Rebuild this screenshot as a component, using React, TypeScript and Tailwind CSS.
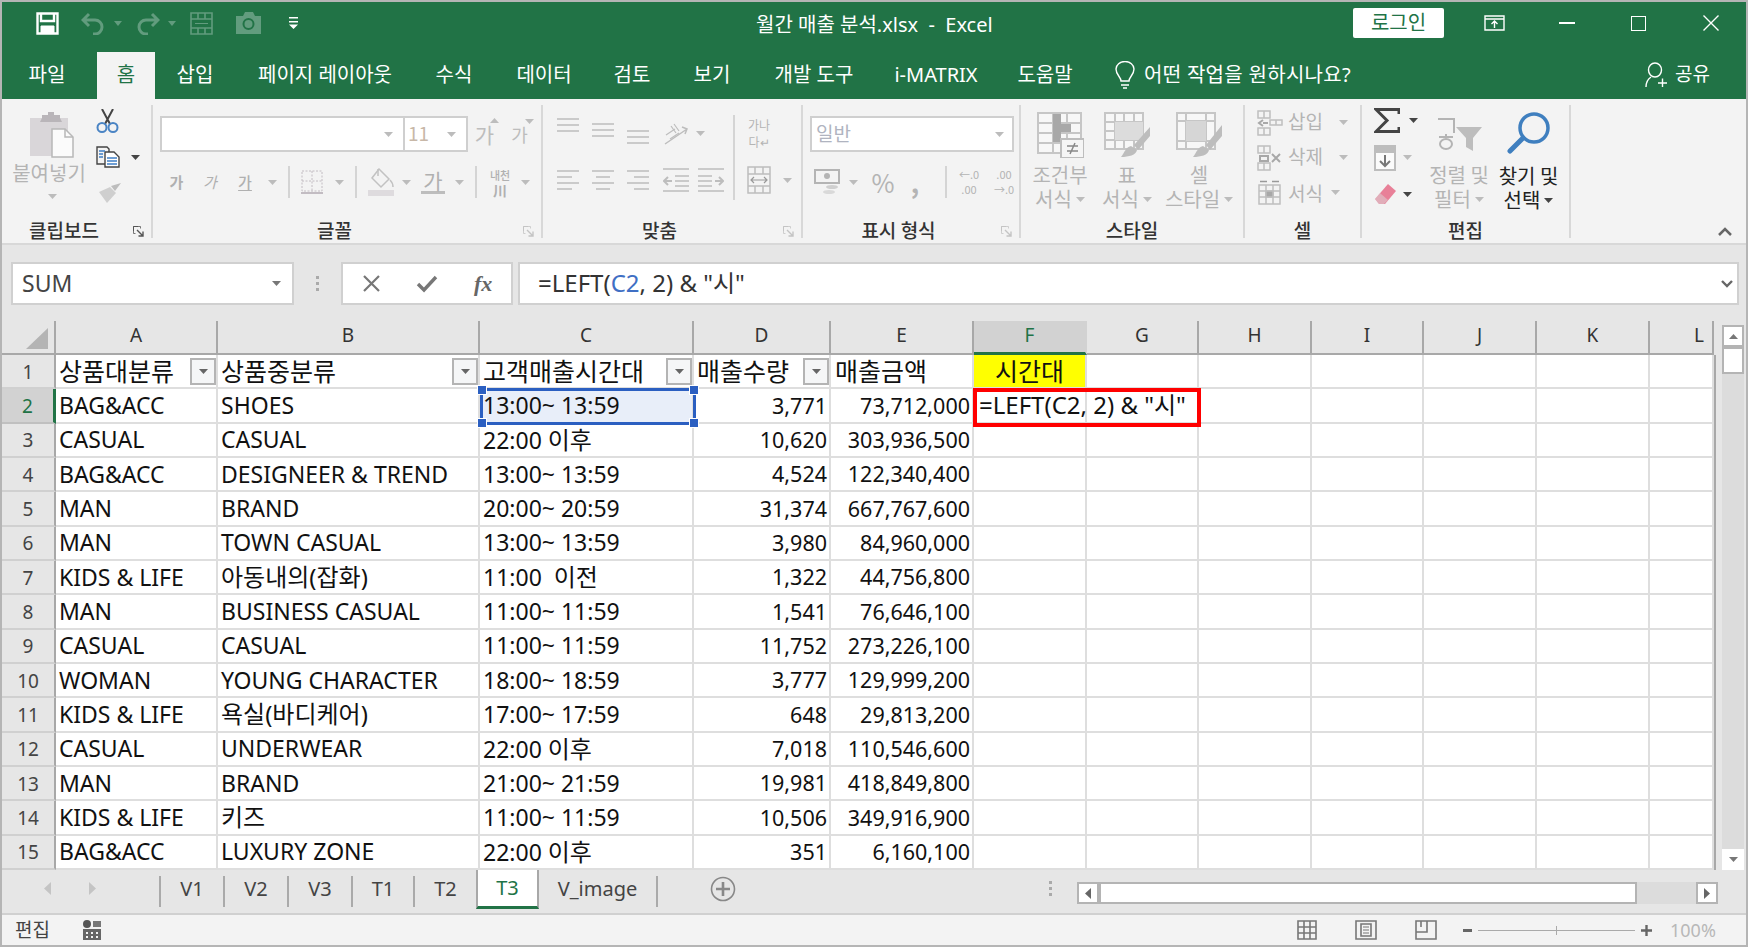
import { ReactNode } from "react";
import clsx from "clsx";

const colLetters = ["A", "B", "C", "D", "E", "F", "G", "H", "I", "J", "K", "L"];

const rows: string[][] = [
  ["BAG&ACC", "SHOES", "13:00~ 13:59", "3,771", "73,712,000"],
  ["CASUAL", "CASUAL", "22:00 이후", "10,620", "303,936,500"],
  ["BAG&ACC", "DESIGNEER & TREND", "13:00~ 13:59", "4,524", "122,340,400"],
  ["MAN", "BRAND", "20:00~ 20:59", "31,374", "667,767,600"],
  ["MAN", "TOWN CASUAL", "13:00~ 13:59", "3,980", "84,960,000"],
  ["KIDS & LIFE", "아동내의(잡화)", "11:00  이전", "1,322", "44,756,800"],
  ["MAN", "BUSINESS CASUAL", "11:00~ 11:59", "1,541", "76,646,100"],
  ["CASUAL", "CASUAL", "11:00~ 11:59", "11,752", "273,226,100"],
  ["WOMAN", "YOUNG CHARACTER", "18:00~ 18:59", "3,777", "129,999,200"],
  ["KIDS & LIFE", "욕실(바디케어)", "17:00~ 17:59", "648", "29,813,200"],
  ["CASUAL", "UNDERWEAR", "22:00 이후", "7,018", "110,546,600"],
  ["MAN", "BRAND", "21:00~ 21:59", "19,981", "418,849,800"],
  ["KIDS & LIFE", "키즈", "11:00~ 11:59", "10,506", "349,916,900"],
  ["BAG&ACC", "LUXURY ZONE", "22:00 이후", "351", "6,160,100"],
];

const tabs = [
  { label: "파일", w: "w-[90px]" },
  { label: "", w: "w-[5px]" },
  { label: "홈", w: "w-[58px]", active: true },
  { label: "삽입", w: "w-[80px]" },
  { label: "페이지 레이아웃", w: "w-[180px]" },
  { label: "수식", w: "w-[78px]" },
  { label: "데이터", w: "w-[102px]" },
  { label: "검토", w: "w-[74px]" },
  { label: "보기", w: "w-[86px]" },
  { label: "개발 도구", w: "w-[118px]" },
  { label: "i-MATRIX", w: "w-[126px]" },
  { label: "도움말", w: "w-[92px]" },
];

const sheets = [
  { label: "V1", w: "w-[64px]" },
  { label: "V2", w: "w-[64px]" },
  { label: "V3", w: "w-[64px]" },
  { label: "T1", w: "w-[62px]" },
  { label: "T2", w: "w-[63px]" },
];

function CellText({ text }: { text: string }) {
  return (
    <>
      {text.split(/([가-힣()]+)/).map((part, i) =>
        /[가-힣]/.test(part) ? (
          <span key={i} className="text-[24px]">
            {part}
          </span>
        ) : (
          part
        )
      )}
    </>
  );
}

function Caret({ className = "fill-[#bcbcbc]" }: { className?: string }) {
  return (
    <svg width="9" height="5" viewBox="0 0 9 5" className={clsx("shrink-0", className)}>
      <path d="M0 0h9L4.5 5z" />
    </svg>
  );
}

function Launcher({ dark }: { dark?: boolean }) {
  const c = dark ? "#555" : "#c4c4c4";
  return (
    <svg width="11" height="11" viewBox="0 0 11 11" fill="none">
      <path d="M.5 5V.5H5" stroke={c} />
      <path d="M.5 .5h7v2M.5 .5v7h2" stroke={c} strokeWidth=".8" />
      <path d="M4 4l5.5 5.5M10 5.5V10H5.5" stroke={c} strokeWidth="1.4" />
    </svg>
  );
}

function Group({
  className,
  label,
  launcher,
  dark,
  children,
}: {
  className: string;
  label: string;
  launcher?: boolean;
  dark?: boolean;
  children: ReactNode;
}) {
  return (
    <div className={clsx("flex h-[133px] shrink-0 flex-col border-r-2 border-[#d8d8d8]", className)}>
      <div className="min-h-0 flex-1">{children}</div>
      <div className="flex h-[18px] items-center">
        <span className="flex-1 text-center text-[19px] leading-none font-medium text-[#333]">{label}</span>
        {launcher && (
          <span className="flex w-[25px] justify-center pt-[4px]">
            <Launcher dark={dark} />
          </span>
        )}
      </div>
    </div>
  );
}

function VSep({ className }: { className?: string }) {
  return <div className={clsx("w-[2px] shrink-0 bg-[#d4d4d4]", className)} />;
}

function Lines({ kind = "center" }: { kind?: "top" | "left" | "right" | "center" }) {
  const d =
    kind === "left"
      ? "M0 1h22M0 7h15M0 13h22M0 19h15"
      : kind === "right"
        ? "M0 1h22M7 7h15M0 13h22M7 19h15"
        : kind === "center"
          ? "M0 1h22M4 7h14M0 13h22M4 19h14"
          : "M0 1h22M0 7h22M0 13h22";
  return (
    <svg width="22" height="20" viewBox="0 0 22 20" fill="none" stroke="#bdbdbd" strokeWidth="1.5">
      <path d={d} />
    </svg>
  );
}

function IndentIcon({ flip }: { flip?: boolean }) {
  return (
    <svg width="26" height="24" viewBox="0 0 26 24" fill="none" stroke="#bdbdbd" strokeWidth="1.5" className={flip ? "-scale-x-100" : ""}>
      <path d="M0 1h26M12 8h14M12 13h14M12 18h14M0 23h26" />
      <path d="M9 13H1M5 9l-4 4 4 4" strokeWidth="2" />
    </svg>
  );
}

function MergeIcon() {
  return (
    <svg width="24" height="28" viewBox="0 0 24 28" fill="none" stroke="#bdbdbd" strokeWidth="1.5">
      <path d="M1 1h22v26H1zM1 8h22M1 20h22M8 1v7M16 1v7M8 20v7M16 20v7" />
      <path d="M4 14h16M7 11l-3 3 3 3M17 11l3 3-3 3" strokeWidth="1.2" stroke="#999" />
    </svg>
  );
}

function CellGridIcon({ variant }: { variant: "cond" | "table" | "cell" }) {
  return (
    <svg width="47" height="46" viewBox="0 0 47 46" fill="none">
      {variant === "cond" && (
        <>
          <path d="M1 1h43v40H1zM1 11h43M1 21h43M1 31h43M16 1v40M30 1v40" stroke="#c6c6c6" strokeWidth="2" fill="#f7f7f7" />
          <path d="M16 2h8v28h-8zM24 12h10v8H24z" fill="#a8a8a8" />
          <path d="M24 27h23v19H24z" fill="#f5f5f5" stroke="#bdbdbd" strokeWidth="2" />
          <path d="M30 34h11M30 39h11M38 31l-5 11" stroke="#888" strokeWidth="1.5" />
        </>
      )}
      {variant === "table" && (
        <>
          <path d="M1 1h38v36H1zM1 10h38M1 19h38M1 28h38M11 1v36M20 1v36M30 1v36" stroke="#c6c6c6" strokeWidth="2" fill="#f7f7f7" />
          <path d="M11 10h28v18H11z" fill="#dcdcdc" />
          <path d="M46 15L30 33l4 5 12-14zM27 34c-6 2-6 6-10 11 8 0 15-2 16-7z" fill="#bdbdbd" />
        </>
      )}
      {variant === "cell" && (
        <>
          <path d="M1 1h38v36H1zM1 9h38M1 29h38M10 1v36M30 1v36" stroke="#c6c6c6" strokeWidth="2" fill="#f7f7f7" />
          <path d="M10 9h20v20H10z" fill="#d6d6d6" />
          <path d="M46 13L30 33l4 5 12-14zM27 34c-6 2-6 6-10 11 8 0 15-2 16-7z" fill="#bdbdbd" />
        </>
      )}
    </svg>
  );
}

function SmallCellIcon({ variant }: { variant: "insert" | "delete" | "format" }) {
  return (
    <svg width="26" height="26" viewBox="0 0 26 26" fill="none" stroke="#bfbfbf" strokeWidth="1.5">
      {variant === "format" ? (
        <>
          <path d="M2 5h21v19H2zM2 11h21M2 17h21M9 5v19M16 5v19" />
          <path d="M9 11h7v6H9z" fill="#a8a8a8" />
          <path d="M3 1.5h7M15 1.5h7" stroke="#999" />
        </>
      ) : (
        <>
          <path d="M1 1h12v7H1zM1 18h12v7H1zM7 1v7M7 18v7" />
          <path d={variant === "insert" ? "M6 13h5M6 10l-4 3 4 3" : "M3 11h8v5H3z"} stroke="#a8a8a8" strokeWidth="2" />
          {variant === "insert" ? (
            <path d="M13 10h12v5H13zM19 10v5" />
          ) : (
            <path d="M15 9l8 8M23 9l-8 8" stroke="#a8a8a8" strokeWidth="2" />
          )}
        </>
      )}
    </svg>
  );
}

function Ribbon() {
  const disabled = "text-[#b4b4b4]";
  return (
    <div className="flex h-[146px] shrink-0 border-b-2 border-[#d8d8d8] bg-[#f3f3f3] pt-[6px] font-['Noto_Sans_CJK_KR','Noto_Sans',sans-serif]">
      <Group className="w-[151px]" label="클립보드" launcher dark>
        <div className="flex h-full">
          <div className="flex w-[94px] flex-col items-center pt-[7px]">
            <svg width="44" height="46" viewBox="0 0 44 46" className="ml-[6px]">
              <path d="M0 6h38v38H0z" fill="#d9d6d9" />
              <path d="M12 6V3h6V0h6v3h6v3l2 4H10z" fill="#b9b5b9" />
              <path d="M22 17h13l8 8v20H22z" fill="#fbfbfb" stroke="#b8b8b8" strokeWidth="1.5" />
              <path d="M35 17v8h8" fill="none" stroke="#b8b8b8" strokeWidth="1.5" />
            </svg>
            <span className={clsx("mt-[2px] text-[20px] leading-[26px]", disabled)}>붙여넣기</span>
            <span className="mt-[8px] ml-[6px]">
              <Caret />
            </span>
          </div>
          <div className="flex flex-col pt-[4px]">
            <svg width="23" height="24" viewBox="0 0 23 24" fill="none">
              <path d="M6 0l8 15M17 0L9 15" stroke="#444" strokeWidth="2" />
              <circle cx="6" cy="18.5" r="4.5" stroke="#4a84c4" strokeWidth="2" />
              <circle cx="17" cy="18.5" r="4.5" stroke="#4a84c4" strokeWidth="2" />
            </svg>
            <div className="mt-[13px] flex items-center gap-[11px]">
              <svg width="24" height="22" viewBox="0 0 24 22" fill="none" stroke="#444" strokeWidth="1.4">
                <path d="M1 1h10l2 2v15H1z" fill="#f3f3f3" />
                <path d="M9 6h9l5 5v10H9z" fill="#fff" />
                <path d="M3 5h6M3 8h4M3 11h4M11 12h10M11 15h10M11 18h10" stroke="#3f7fc6" />
              </svg>
              <Caret className="fill-[#444]" />
            </div>
            <svg width="26" height="22" viewBox="0 0 26 22" className="mt-[14px]">
              <path d="M25 1L15 4l4 5z" fill="#bdbdbd" />
              <path d="M14 5L3 10l8 11 9-10z" fill="#cfcfcf" />
            </svg>
          </div>
        </div>
      </Group>

      <Group className="w-[390px]" label="글꼴" launcher>
        <div className="flex flex-col pt-[11px] pl-[7px]">
          <div className="flex h-[36px] items-center">
            <div className="flex h-full w-[245px] items-center justify-end border-2 border-[#cfcfcf] bg-white pr-[10px]">
              <Caret />
            </div>
            <div className="flex h-full w-[63px] items-center justify-between border-2 border-l-0 border-[#cfcfcf] bg-white pr-[10px] pl-[3px]">
              <span className="pb-[3px] text-[19px] leading-none text-[#c8b8a8]">11</span>
              <Caret />
            </div>
            <div className="relative flex w-[33px] items-center justify-center text-[21px] leading-none text-[#bdbdbd]">
              가
              <span className="absolute -top-[6px] right-[2px]">
                <Caret className="rotate-180 fill-[#bdbdbd]" />
              </span>
            </div>
            <div className="relative flex w-[37px] items-center justify-center text-[18px] leading-none text-[#bdbdbd]">
              가
              <span className="absolute -top-[6px] right-[4px]">
                <Caret className="fill-[#bdbdbd]" />
              </span>
            </div>
          </div>
          <div className="mt-[12px] flex h-[36px] items-center text-[#b0b0b0]">
            <span className="w-[33px] text-center text-[15px] font-bold">가</span>
            <span className="w-[34px] text-center text-[15px] italic">가</span>
            <span className="w-[36px] text-center text-[15px] font-medium underline underline-offset-2">가</span>
            <span className="flex w-[18px] justify-center">
              <Caret />
            </span>
            <span className="flex w-[16px] justify-center">
              <VSep className="h-[32px]" />
            </span>
            <span className="flex w-[30px] justify-center">
              <svg width="22" height="24" viewBox="0 0 22 24" fill="none" stroke="#c2bcc2" strokeDasharray="2 1.5">
                <path d="M1 1h20v20H1zM1 11h20M11 1v20" />
                <path d="M0 23h22" strokeDasharray="none" strokeWidth="2" />
              </svg>
            </span>
            <span className="flex w-[24px] justify-center">
              <Caret />
            </span>
            <span className="flex w-[10px] justify-center">
              <VSep className="h-[32px]" />
            </span>
            <span className="flex w-[40px] justify-center">
              <svg width="26" height="28" viewBox="0 0 26 28" fill="none">
                <path d="M11 1l10 10-8 8-9-9z" stroke="#c2c2c2" strokeWidth="1.5" />
                <path d="M10 1v7M22 12c3 3 3 6 3 7" stroke="#c2c2c2" strokeWidth="1.5" />
                <path d="M0 22h26v6H0z" fill="#dedbde" />
              </svg>
            </span>
            <span className="flex w-[10px] justify-center">
              <Caret />
            </span>
            <span className="flex w-[44px] justify-center text-[21px] leading-none">
              <span className="border-b-[3px] border-[#bdbdbd] px-[2px]">가</span>
            </span>
            <span className="flex w-[8px] justify-center">
              <Caret />
            </span>
            <span className="flex w-[26px] justify-center">
              <VSep className="h-[32px]" />
            </span>
            <span className="flex w-[22px] flex-col items-center whitespace-nowrap">
              <span className="text-[11px] leading-[16px] font-medium">내천</span>
              <span className="text-[14px] leading-[14px] font-bold">川</span>
            </span>
            <span className="ml-[10px]">
              <Caret />
            </span>
          </div>
        </div>
      </Group>

      <Group className="w-[260px]" label="맞춤" launcher>
        <div className="flex pt-[10px] pl-[7px]">
          <div className="flex w-[183px] flex-col">
            <div className="flex h-[36px] items-center">
              <span className="flex w-[35px] justify-center pb-[10px]">
                <Lines kind="top" />
              </span>
              <span className="flex h-[20px] w-[35px] justify-center">
                <Lines kind="top" />
              </span>
              <span className="flex w-[35px] justify-center pt-[14px]">
                <Lines kind="top" />
              </span>
              <span className="flex w-[41px] justify-center">
                <svg width="26" height="26" viewBox="0 0 26 26" fill="none" stroke="#bdbdbd" strokeWidth="1.5">
                  <path d="M2 24L24 9M19 7l5 2-2 5" />
                  <path d="M3 15l9-6M7 19l9-6M8 6l5 7M11 4l5 7" strokeWidth="1.2" />
                </svg>
              </span>
              <Caret />
            </div>
            <div className="mt-[11px] flex h-[36px] items-center">
              <span className="flex w-[35px] justify-center">
                <Lines kind="left" />
              </span>
              <span className="flex w-[35px] justify-center">
                <Lines kind="center" />
              </span>
              <span className="flex w-[35px] justify-center">
                <Lines kind="right" />
              </span>
              <span className="flex w-[41px] justify-center">
                <IndentIcon />
              </span>
              <span className="flex w-[30px] justify-center">
                <IndentIcon flip />
              </span>
            </div>
          </div>
          <VSep className="h-[85px]" />
          <div className="flex flex-col pl-[12px]">
            <div className="flex h-[36px] w-[24px] flex-col items-center justify-center text-[12px] leading-[17px] whitespace-nowrap text-[#b4b4b4]">
              <span>가나</span>
              <span>다↵</span>
            </div>
            <div className="mt-[11px] flex h-[36px] items-center gap-[12px]">
              <MergeIcon />
              <Caret />
            </div>
          </div>
        </div>
      </Group>

      <Group className="w-[218px]" label="표시 형식" launcher>
        <div className="flex flex-col pt-[11px] pl-[7px]">
          <div className="flex h-[36px] w-[204px] items-center justify-between border-2 border-[#cfcfcf] bg-white pr-[8px] pl-[4px]">
            <span className="pb-[3px] text-[19px] leading-none text-[#b0b4c0]">일반</span>
            <Caret />
          </div>
          <div className="mt-[12px] flex h-[36px] items-center">
            <span className="flex w-[34px] justify-center">
              <svg width="26" height="26" viewBox="0 0 26 26" fill="none">
                <path d="M1 1h24v13H1z" stroke="#b4b4b4" strokeWidth="2" />
                <circle cx="13" cy="7" r="3" fill="#b4b4b4" />
                <ellipse cx="18" cy="18" rx="6" ry="2" fill="#cfcfcf" />
                <ellipse cx="15" cy="23" rx="6" ry="2" fill="#d9d9d9" />
              </svg>
            </span>
            <span className="ml-[5px]">
              <Caret />
            </span>
            <span className="ml-[6px] w-[38px] text-center text-[25px] leading-none text-[#b4b4b4]">%</span>
            <span className="w-[26px] text-center text-[26px] leading-none font-bold text-[#b4b4b4]">,</span>
            <VSep className="ml-[17px] h-[32px]" />
            <span className="ml-[10px] flex w-[24px] flex-col items-center text-[11px] leading-[15px] text-[#b4b4b4]">
              <span>←.0</span>
              <span>.00</span>
            </span>
            <span className="ml-[11px] flex w-[24px] flex-col items-center text-[11px] leading-[15px] text-[#b4b4b4]">
              <span>.00</span>
              <span>→.0</span>
            </span>
          </div>
        </div>
      </Group>

      <Group className="w-[224px]" label="스타일">
        <div className={clsx("flex pt-[7px] text-center text-[20px] leading-[24px]", disabled)}>
          <div className="flex w-[78px] flex-col items-center">
            <CellGridIcon variant="cond" />
            <span className="mt-[5px]">조건부</span>
            <span className="flex items-center gap-[4px]">
              서식 <Caret />
            </span>
          </div>
          <div className="flex w-[56px] flex-col items-center">
            <CellGridIcon variant="table" />
            <span className="mt-[5px]">표</span>
            <span className="flex items-center gap-[4px] whitespace-nowrap">
              서식 <Caret />
            </span>
          </div>
          <div className="flex w-[88px] flex-col items-center">
            <CellGridIcon variant="cell" />
            <span className="mt-[5px]">셀</span>
            <span className="flex items-center gap-[4px] whitespace-nowrap">
              스타일 <Caret />
            </span>
          </div>
        </div>
      </Group>

      <Group className="w-[117px]" label="셀">
        <div className={clsx("flex flex-col pl-[12px] text-[19px] leading-none", disabled)}>
          <div className="flex h-[35px] items-center gap-[5px]">
            <SmallCellIcon variant="insert" />
            <span className="pb-[4px]">삽입</span>
            <span className="ml-[11px]">
              <Caret />
            </span>
          </div>
          <div className="flex h-[35px] items-center gap-[5px]">
            <SmallCellIcon variant="delete" />
            <span className="pb-[4px]">삭제</span>
            <span className="ml-[11px]">
              <Caret />
            </span>
          </div>
          <div className="flex h-[35px] items-center gap-[5px]">
            <SmallCellIcon variant="format" />
            <span className="pb-[1px]">서식</span>
            <span className="ml-[3px]">
              <Caret />
            </span>
          </div>
        </div>
      </Group>

      <Group className="w-[209px]" label="편집">
        <div className="flex text-center text-[20px] leading-[24px]">
          <div className="flex w-[68px] flex-col pl-[12px]">
            <div className="flex h-[30px] items-center gap-[9px]">
              <svg width="26" height="25" viewBox="0 0 26 25" fill="none">
                <path d="M25 6V1.5H2L13 12.5 2 23.5h23V19" stroke="#444" strokeWidth="3" />
              </svg>
              <Caret className="fill-[#444]" />
            </div>
            <div className="mt-[9px] flex h-[27px] items-center gap-[7px]">
              <svg width="22" height="26" viewBox="0 0 22 26" fill="none">
                <path d="M1 1h20v24H1z" fill="#fbfbfb" stroke="#bdbdbd" strokeWidth="2" />
                <path d="M1 1h20v7H1z" fill="#bdbdbd" />
                <path d="M11 10v11M6 16l5 5 5-5" stroke="#777" strokeWidth="2" />
              </svg>
              <Caret />
            </div>
            <div className="mt-[11px] flex h-[24px] items-center gap-[7px]">
              <svg width="22" height="22" viewBox="0 0 22 22">
                <path d="M14 1l8 7-11 13H5L1 16z" fill="#e88098" />
                <path d="M1 16l5-6 8 7-4 4H5z" fill="#d9d9d9" opacity=".5" />
              </svg>
              <Caret className="fill-[#444]" />
            </div>
          </div>
          <div className={clsx("flex w-[58px] flex-col items-center pt-[12px]", disabled)}>
            <svg width="46" height="34" viewBox="0 0 46 34" fill="none">
              <path d="M2 2h16v14" stroke="#b4b4b4" strokeWidth="2" />
              <path d="M3 20h14M10 17v3" stroke="#b4b4b4" strokeWidth="2" />
              <ellipse cx="10" cy="27" rx="6" ry="5" stroke="#b4b4b4" strokeWidth="2" />
              <path d="M20 10h26L37 21v13l-7-4v-9z" fill="#bdbdbd" />
            </svg>
            <span className="mt-[12px] whitespace-nowrap">정렬 및</span>
            <span className="flex items-center gap-[4px]">
              필터 <Caret />
            </span>
          </div>
          <div className="flex w-[81px] flex-col items-center pt-[7px] text-[#222]">
            <svg width="44" height="42" viewBox="0 0 44 42" fill="none">
              <circle cx="27" cy="16" r="14" stroke="#3f7fbf" strokeWidth="3.5" />
              <path d="M16 26L3 39" stroke="#3f7fbf" strokeWidth="5" strokeLinecap="round" />
            </svg>
            <span className="mt-[10px] whitespace-nowrap">찾기 및</span>
            <span className="flex items-center gap-[4px]">
              선택 <Caret className="fill-[#444]" />
            </span>
          </div>
        </div>
      </Group>

      <div className="flex flex-1 items-end justify-end pr-[13px] pb-[7px]">
        <svg width="16" height="10" viewBox="0 0 16 10" fill="none" stroke="#666" strokeWidth="2.5">
          <path d="M2 9l6-6 6 6" />
        </svg>
      </div>
    </div>
  );
}

function TitleBar() {
  const muted = "#629c7e";
  return (
    <div className="flex h-[48px] shrink-0 items-center bg-[#217346] pb-[6px] text-white">
      <div className="flex w-[754px] items-center pl-[34px]">
        <svg width="23" height="23" viewBox="0 0 23 23" fill="none" stroke="#fff" strokeWidth="2.4">
          <path d="M1.5 1.5h20v20h-20zM5 2v7h13V2" />
          <path d="M5 22v-8h13v8M10 22v-4h3v4" fill="#fff" stroke="#fff" strokeWidth="1" />
        </svg>
        <svg width="23" height="23" viewBox="0 0 23 23" fill="none" stroke={muted} strokeWidth="3" className="ml-[22px]">
          <path d="M8 2L2 8l6 6M3 8h11a7 7 0 0 1 0 14h-2" />
        </svg>
        <span className="ml-[10px] h-0 w-0 border-x-[4px] border-t-[5px] border-x-transparent border-t-[#629c7e]" />
        <svg width="23" height="23" viewBox="0 0 23 23" fill="none" stroke={muted} strokeWidth="3" className="ml-[15px] -scale-x-100">
          <path d="M8 2L2 8l6 6M3 8h11a7 7 0 0 1 0 14h-2" />
        </svg>
        <span className="ml-[8px] h-0 w-0 border-x-[4px] border-t-[5px] border-x-transparent border-t-[#629c7e]" />
        <svg width="23" height="23" viewBox="0 0 23 23" fill="none" stroke={muted} strokeWidth="1.6" className="ml-[14px]">
          <path d="M1 1h21v21H1zM1 7h21M1 16h21M8 1v6M15 1v6M8 16v6M15 16v6" />
          <path d="M5 11.5h13" strokeWidth="1" />
        </svg>
        <svg width="25" height="22" viewBox="0 0 25 22" className="ml-[23px]">
          <path d="M0 4h7l2-4h8l2 4h6v18H0z" fill={muted} />
          <circle cx="12.5" cy="12" r="5" fill="none" stroke="#217346" strokeWidth="2" />
        </svg>
        <svg width="11" height="14" viewBox="0 0 11 14" fill="#fff" className="ml-[27px]">
          <path d="M1 1h9v1.5H1zM1 5h9v1.5H1zM1 8.5h9L5.5 13z" />
        </svg>
      </div>
      <div className="mt-[4px] w-[597px] text-[20px] whitespace-pre">월간 매출 분석.xlsx  -  Excel</div>
      <div className="flex h-[30px] w-[91px] items-center justify-center rounded-[2px] bg-white text-[20px] text-[#217346]">
        로그인
      </div>
      <svg width="21" height="16" viewBox="0 0 21 16" fill="none" stroke="#fff" strokeWidth="1.4" className="ml-[40px]">
        <path d="M1 1h19v14H1zM1 4h19M10.5 13V7M7.5 9l3-3 3 3" />
      </svg>
      <div className="ml-[54px] h-[2px] w-[16px] bg-white" />
      <div className="ml-[56px] h-[15px] w-[15px] border-[1.5px] border-white" />
      <svg width="16" height="16" viewBox="0 0 16 16" stroke="#fff" strokeWidth="1.4" className="ml-[57px]">
        <path d="M.5.5l15 15M15.5.5l-15 15" />
      </svg>
    </div>
  );
}

function TabBar() {
  return (
    <div className="flex h-[49px] shrink-0 items-end bg-[#217346] text-[20px] text-white">
      {tabs.map((tab, i) => (
        <div
          key={i}
          className={clsx(
            "flex h-[47px] shrink-0 items-center justify-center pb-[2px] whitespace-nowrap",
            tab.w,
            tab.active && "bg-[#f3f3f3] text-[#217346]"
          )}
        >
          {tab.label}
        </div>
      ))}
      <div className="ml-[22px] flex h-[47px] items-center pb-[2px]">
        <svg width="24" height="28" viewBox="0 0 24 28" fill="none" stroke="#fff" strokeWidth="1.4">
          <path d="M8 20c0-4-5-6-5-12a9 7.5 0 0 1 18 0c0 6-5 8-5 12zM8 24h8M10 27h4" />
        </svg>
        <span className="ml-[7px] text-[20px] tracking-[0.3px] whitespace-nowrap">어떤 작업을 원하시나요?</span>
      </div>
      <div className="ml-auto flex h-[47px] items-center pr-[36px] pb-[2px]">
        <svg width="22" height="25" viewBox="0 0 22 25" fill="none" stroke="#fff" strokeWidth="1.4">
          <ellipse cx="10" cy="8" rx="6.5" ry="7" />
          <path d="M1 25c0-5 2-8 5-10M13 21h9M17.500 16.500v8.500" />
        </svg>
        <span className="ml-[8px] text-[19px]">공유</span>
      </div>
    </div>
  );
}

function FormulaBar() {
  const box = "flex h-[43px] items-center border-2 border-[#d0d0d0] bg-white";
  return (
    <div className="flex h-[76px] shrink-0 items-start bg-[#e6e6e6] pt-[17px] pl-[9px]">
      <div className={clsx(box, "w-[283px] justify-between pr-[11px] pl-[9px] text-[23px] text-[#444]")}>
        SUM
        <Caret className="fill-[#777]" />
      </div>
      <div className="flex h-[43px] w-[47px] flex-col items-center justify-center gap-[3px]">
        <span className="h-[3px] w-[3px] bg-[#aaa]" />
        <span className="h-[3px] w-[3px] bg-[#aaa]" />
        <span className="h-[3px] w-[3px] bg-[#aaa]" />
      </div>
      <div className={clsx(box, "w-[172px]")}>
        <span className="flex w-[58px] justify-center">
          <svg width="17" height="17" viewBox="0 0 17 17" stroke="#777" strokeWidth="2.2">
            <path d="M1 1l15 15M16 1L1 16" />
          </svg>
        </span>
        <span className="flex w-[57px] justify-center">
          <svg width="22" height="18" viewBox="0 0 22 18" fill="none" stroke="#777" strokeWidth="3.4">
            <path d="M2 9l6 6L20 2" />
          </svg>
        </span>
        <span className="w-[57px] text-center font-['Liberation_Serif',serif] text-[22px] leading-none font-bold text-[#666] italic">
          fx
        </span>
      </div>
      <div className={clsx(box, "ml-[5px] w-[1221px] justify-between pr-[4px] pl-[18px] text-[24px] leading-none text-[#333]")}>
        <span className="pb-[2px] whitespace-pre">
          =LEFT(<span className="text-[#3f6fc4]">C2</span>, 2) &amp; "시"
        </span>
        <svg width="12" height="8" viewBox="0 0 12 8" fill="none" stroke="#666" strokeWidth="2.4">
          <path d="M1 1l5 5 5-5" />
        </svg>
      </div>
    </div>
  );
}

function FilterButton() {
  return (
    <span className="flex h-[27px] w-[26px] shrink-0 items-center justify-center border-2 border-[#b4b4b4] bg-[#f5f6f7]">
      <Caret className="fill-[#666]" />
    </span>
  );
}

function Sheet() {
  const cell = "flex items-center overflow-hidden whitespace-pre border-r-2 border-b-2 border-[#dedede] leading-none text-[#111]";
  const header = ["상품대분류", "상품중분류", "고객매출시간대", "매출수량"];
  return (
    <div className="flex h-[549px] shrink-0">
      <div className="relative w-[1712px] shrink-0 bg-white">
        <div className="grid grid-cols-[54px_162px_262px_214px_137px_143px_113px_112px_113px_112px_113px_113px_64px] grid-rows-[34px_repeat(15,34.33px)]">
          <div className="flex items-end justify-end border-r-2 border-b-2 border-[#a8a8a8] bg-[#e6e6e6] pr-[6px] pb-[4px]">
            <svg width="22" height="21" viewBox="0 0 22 21">
              <path d="M22 0v21H0z" fill="#b4b4b4" />
            </svg>
          </div>
          {colLetters.map((c) => (
            <div
              key={c}
              className={clsx(
                "flex items-center justify-center border-r-2 pb-[3px] text-[19px] leading-none",
                c === "F"
                  ? "border-b-[3px] border-r-[#d2d2d2] border-b-[#217346] bg-[#d2d2d2] text-[#217346]"
                  : "border-b-2 border-[#a8a8a8] bg-[#e6e6e6] text-[#333]",
                c === "L" && "justify-end border-r-0 pr-[8px]"
              )}
            >
              {c}
            </div>
          ))}

          <div className="flex items-center justify-center border-r-2 border-b-2 border-[#a8a8a8] border-b-[#d0d0d0] bg-[#e6e6e6] pt-[2px] text-[19px] leading-none text-[#444]">
            1
          </div>
          {header.map((h) => (
            <div key={h} className={clsx(cell, "justify-between pl-[3px] text-[25px]")}>
              {h}
              <FilterButton />
            </div>
          ))}
          <div className={clsx(cell, "pl-[4px] text-[25px]")}>매출금액</div>
          <div className={clsx(cell, "justify-center bg-[#ffff00] text-[25px]")}>시간대</div>
          {[0, 1, 2, 3, 4, 5].map((i) => (
            <div key={i} className={clsx(cell, i === 5 && "border-r-0")} />
          ))}

          {rows.map((row, r) => (
            <div key={r} className="contents">
              <div
                className={clsx(
                  "flex items-center justify-center border-b-2 pt-[2px] text-[19px] leading-none",
                  r === 0
                    ? "border-r-[3px] border-r-[#217346] border-b-[#c0c0c0] bg-[#d2d2d2] text-[#217346]"
                    : "border-r-2 border-r-[#a8a8a8] border-b-[#d0d0d0] bg-[#e6e6e6] text-[#444]"
                )}
              >
                {r + 2}
              </div>
              {row.map((v, c) => (
                <div
                  key={c}
                  className={clsx(
                    cell,
                    c < 3 ? "pl-[3px] text-[23px]" : "justify-end pr-[2px] text-[21.5px]",
                    r === 0 && c === 2 && "bg-[#e8eef9]"
                  )}
                >
                  <span>
                    <CellText text={v} />
                  </span>
                </div>
              ))}
              <div className={clsx(cell, "overflow-visible pl-[5px] text-[24px]", r === 0 && "border-r-0")}>
                {r === 0 && '=LEFT(C2, 2) & "시"'}
              </div>
              {[0, 1, 2, 3, 4, 5].map((i) => (
                <div key={i} className={clsx(cell, i === 5 && "border-r-0")} />
              ))}
            </div>
          ))}
        </div>

        {/* 선택 셀 테두리 + 빨간 강조 박스 */}
        <div className="pointer-events-none absolute top-[67px] left-[478px] h-[37px] w-[216px] border-[3px] border-[#2b5fc1]">
          <span className="absolute -top-[5px] -left-[5px] h-[8px] w-[8px] bg-[#2b5fc1] ring-1 ring-white" />
          <span className="absolute -top-[5px] -right-[5px] h-[8px] w-[8px] bg-[#2b5fc1] ring-1 ring-white" />
          <span className="absolute -bottom-[5px] -left-[5px] h-[8px] w-[8px] bg-[#2b5fc1] ring-1 ring-white" />
          <span className="absolute -right-[5px] -bottom-[5px] h-[8px] w-[8px] bg-[#2b5fc1] ring-1 ring-white" />
        </div>
        <div className="pointer-events-none absolute top-[67px] left-[971px] h-[39px] w-[228px] border-[4px] border-[#ff0000]" />
      </div>
      <div className="mt-[34px] h-[515px] w-[2px] shrink-0 bg-[#a8a8a8]" />
      <div className="ml-[6px] flex w-[22px] shrink-0 flex-col">
        <div className="mt-[4px] flex h-[22px] shrink-0 items-center justify-center border-2 border-[#b4b4b4] bg-white">
          <Caret className="rotate-180 fill-[#777]" />
        </div>
        <div className="flex min-h-0 flex-1 flex-col bg-[#dcdcdc]">
          <div className="h-[27px] shrink-0 border-2 border-[#b4b4b4] bg-white" />
        </div>
        <div className="flex h-[21px] shrink-0 items-center justify-center bg-white">
          <Caret className="fill-[#777]" />
        </div>
      </div>
      <div className="flex-1" />
    </div>
  );
}

function SheetTabs() {
  return (
    <div className="flex h-[45px] shrink-0 items-start border-b-2 border-[#d0d0d0] bg-[#e6e6e6] text-[20px] leading-none text-[#444]">
      <div className="flex h-[37px] w-[157px] items-center pl-[42px]">
        <svg width="7" height="13" viewBox="0 0 7 13" fill="#c4c4c4">
          <path d="M7 0v13L0 6.500z" />
        </svg>
        <svg width="7" height="13" viewBox="0 0 7 13" fill="#c4c4c4" className="ml-[38px]">
          <path d="M0 0v13l7-6.500z" />
        </svg>
      </div>
      {sheets.map((s) => (
        <div key={s.label} className={clsx("mt-[6px] flex h-[31px] items-center justify-center border-l-2 border-[#aaa] pb-[5px]", s.w)}>
          {s.label}
        </div>
      ))}
      <div className="-mt-[2px] flex h-[41px] w-[63px] items-center justify-center border-x-2 border-b-[3px] border-x-[#a8a8a8] border-b-[#217346] bg-white pt-[2px] text-[#217346]">
        T3
      </div>
      <div className="mt-[6px] flex h-[31px] w-[119px] items-center justify-center border-r-2 border-[#aaa] pb-[5px]">V_image</div>
      <div className="ml-[52px] flex h-[37px] items-center">
        <svg width="26" height="26" viewBox="0 0 26 26" fill="none" stroke="#888" strokeWidth="1.6">
          <circle cx="13" cy="13" r="11.500" />
          <path d="M13 6v14M6 13h14" strokeWidth="2.6" />
        </svg>
      </div>
      <div className="ml-[313px] flex h-[37px] flex-col items-center justify-center gap-[3px]">
        <span className="h-[3px] w-[3px] bg-[#aaa]" />
        <span className="h-[3px] w-[3px] bg-[#aaa]" />
        <span className="h-[3px] w-[3px] bg-[#aaa]" />
      </div>
      <div className="mt-[12px] ml-[25px] flex h-[22px] w-[641px] bg-[#dcdcdc]">
        <div className="flex w-[22px] items-center justify-center border-2 border-[#b4b4b4] bg-white">
          <svg width="6" height="11" viewBox="0 0 6 11" fill="#666">
            <path d="M6 0v11L0 5.500z" />
          </svg>
        </div>
        <div className="w-[538px] border-2 border-[#b4b4b4] bg-white" />
        <div className="flex-1" />
        <div className="flex w-[22px] items-center justify-center border-2 border-[#b4b4b4] bg-white">
          <svg width="6" height="11" viewBox="0 0 6 11" fill="#666">
            <path d="M0 0v11l6-5.500z" />
          </svg>
        </div>
      </div>
    </div>
  );
}

function StatusBar() {
  return (
    <div className="flex h-[30px] shrink-0 items-center bg-[#f3f3f3] pl-[13px] text-[#444]">
      <span className="w-[67px] text-[19px] leading-none">편집</span>
      <svg width="20" height="20" viewBox="0 0 20 20">
        <circle cx="5" cy="4" r="4" fill="#555" />
        <path d="M11 1h8v6h-8z" fill="#777" />
        <path d="M1 9h18v11H1z" fill="#666" />
        <path d="M4 12h2v2H4zM9 12h2v2H9zM14 12h2v2h-2zM4 16h2v2H4zM9 16h2v2H9zM14 16h2v2h-2z" fill="#f3f3f3" />
      </svg>
      <svg width="20" height="20" viewBox="0 0 20 20" fill="none" stroke="#777" strokeWidth="1.6" className="ml-[1195px]">
        <path d="M1 1h18v18H1zM1 7h18M1 13h18M7 1v18M13 1v18" />
      </svg>
      <svg width="22" height="20" viewBox="0 0 22 20" fill="none" stroke="#777" strokeWidth="1.6" className="ml-[38px]">
        <path d="M1 1h20v18H1zM6 4h10v12H6z" />
        <path d="M8 7h6M8 10h6M8 13h6" strokeWidth="1.2" />
      </svg>
      <svg width="22" height="20" viewBox="0 0 22 20" fill="none" stroke="#777" strokeWidth="1.6" className="ml-[38px]">
        <path d="M1 1h20v18H1zM1 12h11V1M6 1v6" />
      </svg>
      <span className="ml-[26px] h-[3px] w-[9px] bg-[#666]" />
      <div className="relative ml-[6px] h-[1px] w-[157px] bg-[#aaa]">
        <span className="absolute -top-[4px] left-[78px] h-[9px] w-[1px] bg-[#aaa]" />
      </div>
      <svg width="11" height="11" viewBox="0 0 11 11" stroke="#666" strokeWidth="2.4" className="ml-[6px]">
        <path d="M0 5.500h11M5.500 0v11" />
      </svg>
      <span className="ml-[18px] text-[18px] leading-none text-[#b8b8b8]">100%</span>
    </div>
  );
}

export default function App() {
  return (
    <div className="flex h-[947px] w-[1748px] flex-col overflow-hidden border-2 border-[#b5b5b5] bg-[#e6e6e6] font-['Noto_Sans','Noto_Sans_CJK_KR',sans-serif]">
      <TitleBar />
      <TabBar />
      <Ribbon />
      <FormulaBar />
      <Sheet />
      <SheetTabs />
      <StatusBar />
    </div>
  );
}
